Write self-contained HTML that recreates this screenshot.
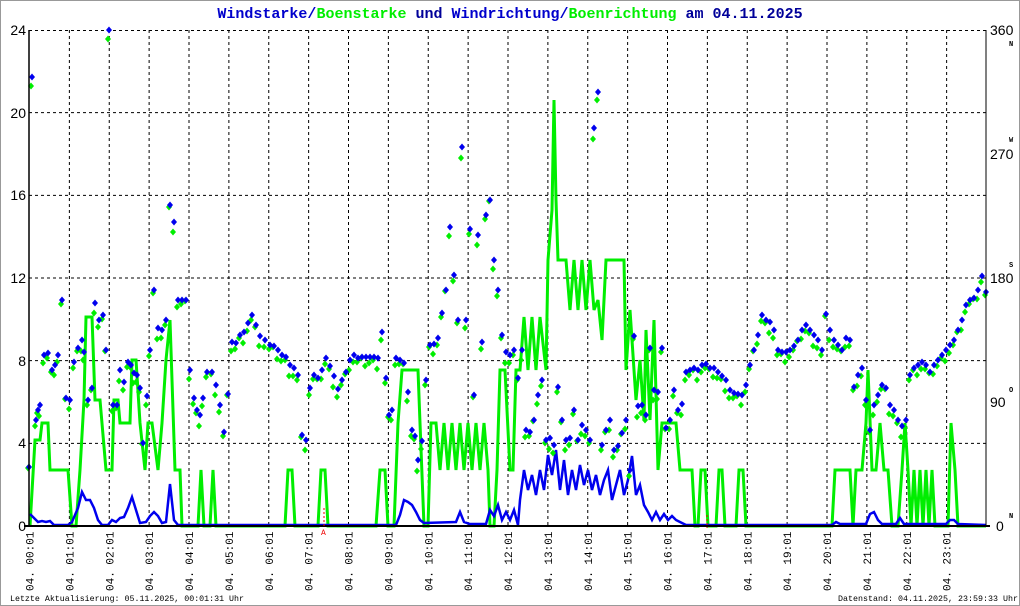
<!DOCTYPE html>
<html><head><meta charset="utf-8"><style>
html,body{margin:0;padding:0;background:#fff}
svg{display:block}
text{font-family:"Liberation Mono",monospace}
</style></head><body>
<svg id="s" width="1020" height="606" xmlns="http://www.w3.org/2000/svg">
<rect x="0.5" y="0.5" width="1019" height="605" fill="#fff" stroke="#999" stroke-width="1"/>
<g id="grid" stroke="#000" stroke-width="1" stroke-dasharray="3,3" fill="none"></g>
<text x="510" y="18" text-anchor="middle" font-size="15" font-weight="bold" fill="#000099"><tspan fill="#0000cc">Windstarke/</tspan><tspan fill="#00ee00">Boenstarke</tspan> und <tspan fill="#0000cc">Windrichtung/</tspan><tspan fill="#00ee00">Boenrichtung</tspan> am 04.11.2025</text>
<g font-size="14" fill="#000">
<text x="26" y="35" text-anchor="end" style="font-family:'Liberation Sans',sans-serif">24</text>
<text x="26" y="118" text-anchor="end" style="font-family:'Liberation Sans',sans-serif">20</text>
<text x="26" y="200" text-anchor="end" style="font-family:'Liberation Sans',sans-serif">16</text>
<text x="26" y="283" text-anchor="end" style="font-family:'Liberation Sans',sans-serif">12</text>
<text x="26" y="366" text-anchor="end" style="font-family:'Liberation Sans',sans-serif">8</text>
<text x="26" y="448" text-anchor="end" style="font-family:'Liberation Sans',sans-serif">4</text>
<text x="26" y="531" text-anchor="end" style="font-family:'Liberation Sans',sans-serif">0</text>
<text x="990" y="35" style="font-family:'Liberation Sans',sans-serif">360</text>
<text x="990" y="159" style="font-family:'Liberation Sans',sans-serif">270</text>
<text x="990" y="283" style="font-family:'Liberation Sans',sans-serif">180</text>
<text x="990" y="407" style="font-family:'Liberation Sans',sans-serif">90</text>
<text x="996" y="531" style="font-family:'Liberation Sans',sans-serif">0</text>
</g>
<g font-size="7" font-weight="bold" fill="#000">
<text x="1009" y="46">N</text><text x="1009" y="142">W</text><text x="1009" y="267">S</text><text x="1009" y="392">O</text><text x="1009" y="518">N</text>
</g>
<g id="xl" font-size="11" fill="#000"></g>
<polyline id="green" fill="none" stroke="#00ee00" stroke-width="3" points=""/>
<polyline id="blue" fill="none" stroke="#0000ee" stroke-width="2.5" points=""/>
<g id="dg" fill="#00ee00"></g>
<g id="db" fill="#0000ee"></g>
<line x1="29" y1="30" x2="29" y2="527" stroke="#000" stroke-width="1.5"/>
<line x1="986" y1="30" x2="986" y2="527" stroke="#000" stroke-width="1"/>
<line x1="24" y1="526" x2="990" y2="526" stroke="#000" stroke-width="2"/>
<line x1="324" y1="508" x2="324" y2="528" stroke="#e00" stroke-width="1" stroke-dasharray="2,2"/>
<text x="321" y="535" font-size="8" fill="#e00">A</text>
<line x1="707" y1="515" x2="707" y2="528" stroke="#e00" stroke-width="1" stroke-dasharray="2,2"/>
<text x="10" y="601" font-size="8.5" fill="#000" textLength="234" lengthAdjust="spacingAndGlyphs">Letzte Aktualisierung: 05.11.2025, 00:01:31 Uhr</text>
<text x="838" y="601" font-size="8.5" fill="#000" textLength="180" lengthAdjust="spacingAndGlyphs">Datenstand: 04.11.2025, 23:59:33 Uhr</text>
</svg>
<script>
var NS="http://www.w3.org/2000/svg";
var g=document.getElementById('grid'),xl=document.getElementById('xl');
function el(p,t,a){var e=document.createElementNS(NS,t);for(var k in a)e.setAttribute(k,a[k]);p.appendChild(e);return e;}
for(var v=1;v<6;v++){var y=526-v*82.67;el(g,'line',{x1:29,y1:y,x2:986,y2:y});}
el(g,'line',{x1:29,y1:30.5,x2:986,y2:30.5});
for(var h=0;h<24;h++){var x=29+39.875*h+0.5;if(h>0)el(g,'line',{x1:x,y1:30,x2:x,y2:526});
 var t=el(xl,'text',{transform:'translate('+(x+4)+',591) rotate(-90)'});t.textContent='04. '+(h<10?'0':'')+h+':01';}
var G=[30,526,35,440,40,440,42,423,48,423,50,470,68,470,72,526,76,526,80,470,84,400,86,317,92,317,95,400,100,400,106,470,112,470,114,400,118,400,120,423,130,423,132,360,136,360,140,423,145,470,148,423,152,423,158,470,162,423,166,360,170,320,175,470,180,470,182,526,198,526,201,470,204,526,210,526,213,470,216,526,285,526,288,470,292,470,295,526,318,526,321,470,325,470,328,526,376,526,380,470,385,470,388,526,394,526,398,423,402,370,418,370,420,423,424,526,428,526,431,423,436,423,440,470,444,423,448,470,452,423,456,470,460,423,464,470,468,423,472,470,476,423,480,470,484,423,488,470,490,526,494,526,497,470,500,370,505,370,510,470,513,470,516,370,520,370,524,317,528,370,532,317,536,370,540,317,546,370,548,260,552,210,554,100,556,200,558,260,566,260,570,310,574,260,578,310,582,260,586,310,590,260,594,310,598,300,602,340,606,260,624,260,626,370,630,310,634,370,636,400,640,360,644,420,646,330,650,420,654,320,658,470,662,423,676,423,680,470,692,470,695,526,698,526,701,470,705,470,708,526,716,526,719,470,722,470,725,526,736,526,739,470,743,470,746,526,832,526,835,470,850,470,853,526,856,470,862,470,866,423,868,370,872,470,876,470,880,423,884,470,888,470,892,526,898,526,902,470,905,423,908,470,911,526,914,470,917,526,920,470,923,526,926,470,929,526,932,470,935,526,948,526,951,423,955,470,958,526,986,526];
var B=[30,514,34,518,38,522,42,521,46,522,50,521,54,525,68,525,72,522,78,508,82,492,86,500,90,500,94,508,98,520,102,525,108,525,112,520,116,522,120,518,124,517,128,508,132,497,136,510,140,523,146,522,150,516,154,512,158,516,162,523,166,522,170,484,174,520,178,525,396,525,400,515,404,500,408,502,412,505,416,512,420,520,424,523,456,522,460,512,464,522,470,524,486,524,490,510,494,516,498,505,502,520,506,512,510,520,514,510,518,525,520,500,524,470,528,490,532,475,536,495,540,470,544,490,548,455,552,475,556,450,560,490,564,460,568,495,572,470,576,490,580,465,584,485,588,470,592,490,596,475,600,495,604,480,608,470,612,500,616,485,620,470,624,495,628,480,632,456,636,495,640,485,644,505,648,512,652,520,656,512,660,520,664,514,668,520,672,516,676,520,680,522,686,525,832,525,836,522,840,524,866,524,870,514,874,512,878,520,882,524,896,524,900,518,904,524,946,524,950,520,954,520,958,524,986,525];
document.getElementById('green').setAttribute('points',G.join(' '));
document.getElementById('blue').setAttribute('points',B.join(' '));
var D=[29,467,32,77,36,420,38,410,40,405,44,355,48,353,52,370,55,365,58,355,62,300,66,398,70,400,74,362,78,348,82,340,84,352,88,400,92,388,95,303,99,320,103,315,106,350,109,30,113,405,117,405,120,370,124,382,128,362,131,365,134,373,137,375,140,388,143,443,147,396,150,350,154,290,158,328,162,330,166,320,170,205,174,222,178,300,182,300,186,300,190,370,194,398,197,410,200,415,203,398,207,372,212,372,216,385,220,405,224,432,228,394,232,342,236,343,240,335,244,332,248,323,252,315,256,325,260,336,265,340,270,345,274,346,278,350,282,355,286,357,290,365,294,368,298,375,302,435,306,440,310,388,314,375,318,378,322,370,326,358,330,366,334,376,338,389,342,380,346,372,350,360,354,355,358,358,362,357,366,357,370,357,374,357,378,358,382,332,386,378,389,415,392,410,396,358,400,360,404,363,408,392,412,430,415,436,418,460,422,441,426,380,430,345,434,344,438,338,442,313,446,290,450,227,454,275,458,320,462,147,466,320,470,229,474,395,478,235,482,342,486,215,490,200,494,260,498,290,502,335,506,352,510,355,514,350,518,378,522,350,526,430,530,432,534,420,538,395,542,380,546,440,550,438,554,445,558,387,562,420,566,440,570,438,574,410,578,440,582,425,586,430,590,440,594,128,598,92,602,445,606,430,610,420,614,450,618,446,622,433,626,420,630,470,634,336,638,406,642,405,646,415,650,348,654,390,658,392,662,348,666,428,670,420,674,390,678,410,682,404,686,372,690,370,694,368,698,370,702,365,706,364,710,368,714,368,718,372,722,376,726,380,730,390,734,393,738,394,742,395,746,385,750,365,754,350,758,335,762,315,766,320,770,322,774,330,778,350,782,352,786,352,790,350,794,346,798,340,802,330,806,325,810,330,814,335,818,340,822,350,826,314,830,330,834,340,838,345,842,350,846,338,850,340,854,387,858,375,862,368,866,400,870,430,874,405,878,395,882,385,886,388,890,405,894,410,898,420,902,426,906,420,910,375,914,368,918,365,922,362,926,365,930,372,934,365,938,360,942,355,946,350,950,345,954,340,958,330,962,320,966,305,970,300,974,298,978,290,982,276,986,292];
var dg=document.getElementById('dg'),db=document.getElementById('db');
function dia(p,x,y){el(p,'path',{d:'M'+x+' '+(y-3.5)+'L'+(x+3)+' '+y+'L'+x+' '+(y+3.5)+'L'+(x-3)+' '+y+'Z'});}
for(var i=0;i<D.length;i+=2){var j=((i*37)%11)-3;dia(dg,D[i]-1,D[i+1]+4+j);}
for(var i=0;i<D.length;i+=2){dia(db,D[i],D[i+1]);}
</script>
</body></html>
